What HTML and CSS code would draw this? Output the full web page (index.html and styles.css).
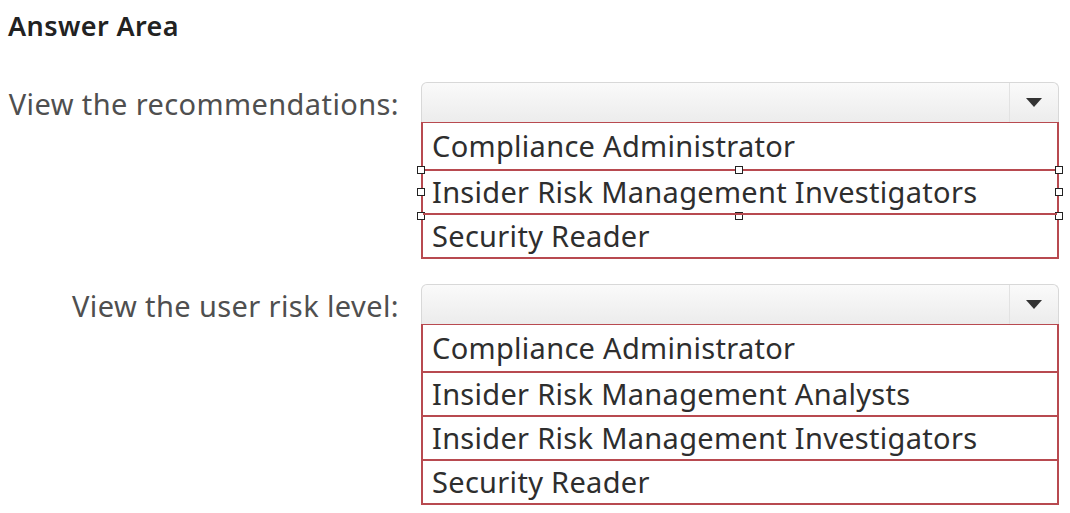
FILE: index.html
```html
<!DOCTYPE html>
<html lang="en">
<head>
    <meta charset="UTF-8">
    <title>Answer Area</title>
    <link rel="stylesheet" href="styles.css">
</head>
<body>

    <div class="page">
        <h2 class="title">Answer Area</h2>

        <div class="question">
            <div class="label">View the recommendations:</div>
            <div class="control">
                <div class="select">
                    <span class="select-value"></span>
                    <span class="select-arrow"><span class="caret"></span></span>
                </div>
                <ul class="options">
                    <li>Compliance Administrator</li>
                    <li class="selected">
                        Insider Risk Management Investigators
                        <span class="handle h-tl"></span>
                        <span class="handle h-tc"></span>
                        <span class="handle h-tr"></span>
                        <span class="handle h-ml"></span>
                        <span class="handle h-mr"></span>
                        <span class="handle h-bl"></span>
                        <span class="handle h-bc"></span>
                        <span class="handle h-br"></span>
                    </li>
                    <li>Security Reader</li>
                </ul>
            </div>
        </div>

        <div class="question">
            <div class="label">View the user risk level:</div>
            <div class="control">
                <div class="select">
                    <span class="select-value"></span>
                    <span class="select-arrow"><span class="caret"></span></span>
                </div>
                <ul class="options">
                    <li>Compliance Administrator</li>
                    <li>Insider Risk Management Analysts</li>
                    <li>Insider Risk Management Investigators</li>
                    <li>Security Reader</li>
                </ul>
            </div>
        </div>
    </div>

</body>
</html>
```

FILE: styles.css
```css
body {
    margin: 0;
    background: #fff;
    font-family: "Noto Sans", "Open Sans", sans-serif;
    color: #333;
}
.page {
    padding: 10px 0 0 8px;
}
.title {
    margin: 0 0 40px;
    font-size: 27px;
    line-height: 32px;
    font-weight: 600;
    color: #222;
    letter-spacing: 0.4px;
}
.question {
    display: grid;
    grid-template-columns: 391px 638px;
    column-gap: 22px;
    margin-bottom: 25px;
}
.label {
    text-align: right;
    font-size: 29px;
    line-height: 44px;
    color: #4f4f4f;
    letter-spacing: 0.4px;
}
.select {
    display: flex;
    height: 40px;
    border: 1px solid #d8d8d8;
    border-bottom: none;
    border-radius: 6px 6px 0 0;
    background: linear-gradient(#fafafa, #ececec);
    box-sizing: border-box;
}
.select-value {
    flex: 1;
}
.select-arrow {
    width: 48px;
    border-left: 1px solid #e2e2e2;
    display: flex;
    align-items: center;
    justify-content: center;
}
.caret {
    width: 0;
    height: 0;
    border-left: 8px solid transparent;
    border-right: 8px solid transparent;
    border-top: 9px solid #333;
}
.options {
    list-style: none;
    margin: 0;
    padding: 0;
    border: 2px solid #b84a50;
    border-top-width: 1px;
}
.options li {
    position: relative;
    height: 42px;
    line-height: 42px;
    padding-left: 9px;
    font-size: 29px;
    color: #2e2e2e;
    letter-spacing: 0.3px;
    border-top: 2px solid #b84a50;
}
.options li:first-child {
    border-top: none;
    height: 46px;
    line-height: 46px;
}
.handle {
    position: absolute;
    width: 6px;
    height: 6px;
    background: #fff;
    border: 1px solid #222;
}
.h-tl { left: -6px; top: -5px; }
.h-tc { left: 312px; top: -5px; }
.h-tr { right: -6px; top: -5px; }
.h-ml { left: -6px; top: 17px; }
.h-mr { right: -6px; top: 17px; }
.h-bl { left: -6px; bottom: -7px; }
.h-bc { left: 312px; bottom: -7px; }
.h-br { right: -6px; bottom: -7px; }
```
